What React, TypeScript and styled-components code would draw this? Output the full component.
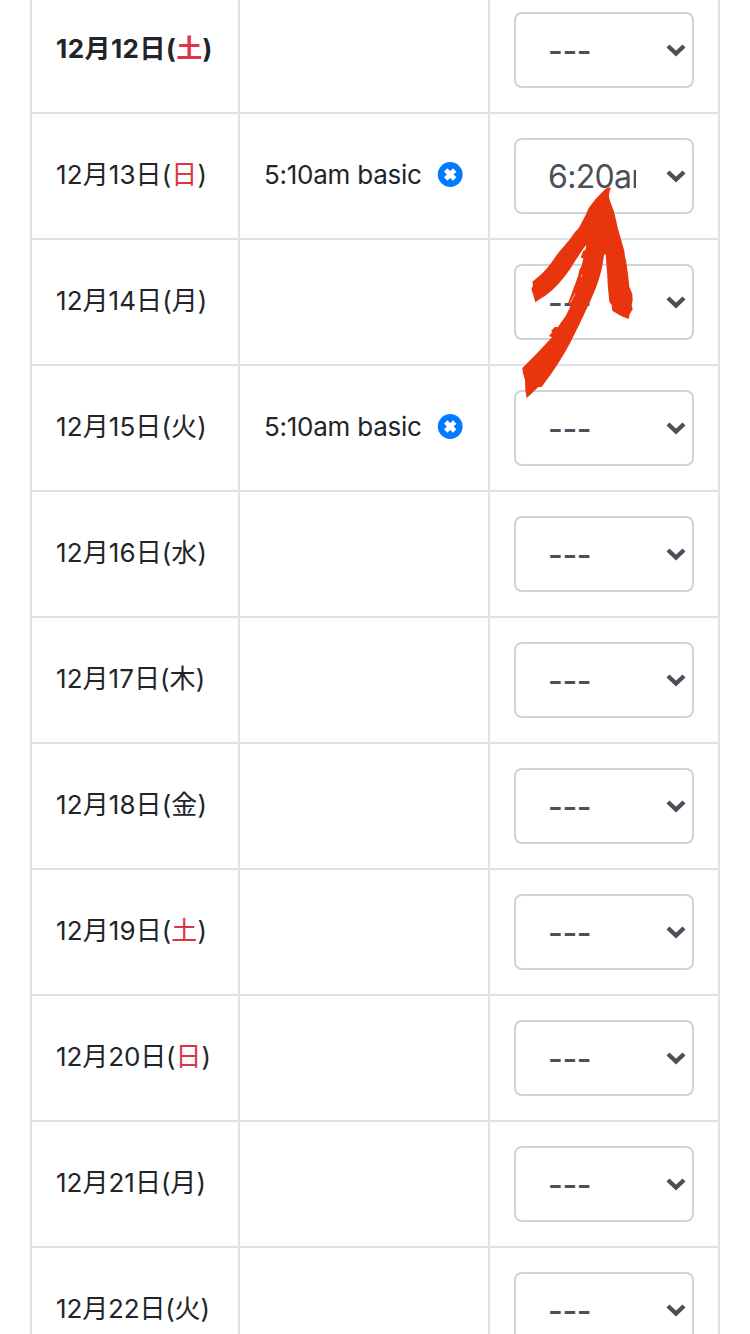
import React from "react";
import styled, { createGlobalStyle } from "styled-components";

const GlobalStyle = createGlobalStyle`
  * { box-sizing: border-box; }
  body {
    margin: 0;
    background: #fff;
    color: #212529;
    font-family: Inter, "Noto Sans CJK JP", sans-serif;
    font-size: 26px;
    -webkit-font-smoothing: antialiased;
  }
`;

const Page = styled.main`
  position: relative;
  width: 750px;
  height: 1334px;
  overflow: hidden;
`;

const Schedule = styled.div`
  width: 690px;
  margin: -12px 0 0 30px;
  border-left: 2px solid #dee2e6;
`;

const Row = styled.div<{ $today?: boolean }>`
  display: grid;
  grid-template-columns: 208px 250px 230px;
  height: 126px;
  font-weight: ${(p) => (p.$today ? 700 : 400)};
`;

const Cell = styled.div`
  display: flex;
  align-items: flex-start;
  padding: 24px;
  border-right: 2px solid #dee2e6;
  border-bottom: 2px solid #dee2e6;
  line-height: 38px;
  white-space: nowrap;
`;

const DateText = styled.span<{ $spacing: number }>`
  padding-top: 18px;
  letter-spacing: ${(p) => p.$spacing}px;
`;

const Day = styled.span<{ $holiday: boolean }>`
  color: ${(p) => (p.$holiday ? "#dc3545" : "inherit")};
`;

const Booking = styled.div`
  display: flex;
  align-items: center;
  padding-top: 18px;
  letter-spacing: -0.25px;
`;

const BookingName = styled.span`
  width: 173px;
`;

const CancelIcon = styled.svg`
  width: 26px;
  height: 26px;
  margin-top: -1px;
`;

const Select = styled.div`
  display: flex;
  align-items: center;
  justify-content: space-between;
  width: 180px;
  height: 76px;
  padding: 2px 6px 0 32px;
  border: 2px solid #ced4da;
  border-radius: 8px;
  color: #495057;
  font-size: 32px;
  font-weight: 400;
`;

const Value = styled.span<{ $empty: boolean }>`
  width: 88px;
  overflow: hidden;
  font-weight: ${(p) => (p.$empty ? 500 : 400)};
  letter-spacing: ${(p) => (p.$empty ? -0.4 : -0.7)}px;
`;

const Chevron = styled.svg`
  width: 20px;
  height: 14px;
  margin-top: -2px;
`;

const Arrow = styled.svg`
  position: absolute;
  left: 515px;
  top: 180px;
  width: 125px;
  height: 225px;
`;

interface Entry {
  date: number;
  day: string;
  spacing?: number;
}

const entries: Entry[] = [
  { date: 12, day: "土", spacing: 0.45 },
  { date: 13, day: "日", spacing: 0.1 },
  { date: 14, day: "月", spacing: 0.05 },
  { date: 15, day: "火", spacing: 0.1 },
  { date: 16, day: "水", spacing: 0.1 },
  { date: 17, day: "木", spacing: 0.05 },
  { date: 18, day: "金", spacing: 0.1 },
  { date: 19, day: "土", spacing: 0.1 },
  { date: 20, day: "日", spacing: -0.1 },
  { date: 21, day: "月" },
  { date: 22, day: "火", spacing: -0.15 },
];

const bookings: Record<number, string> = { 13: "5:10am basic", 15: "5:10am basic" };
const selections: Record<number, string> = { 13: "6:20am" };

export default function App() {
  return (
    <Page>
      <GlobalStyle />
      <Schedule>
        {entries.map(({ date, day, spacing = 0 }) => (
          <Row key={date} $today={date === 12}>
            <Cell>
              <DateText $spacing={spacing}>
                12月{date}日(<Day $holiday={"土日".includes(day)}>{day}</Day>)
              </DateText>
            </Cell>
            <Cell>
              {bookings[date] && (
                <Booking>
                  <BookingName>{bookings[date]}</BookingName>
                  <CancelIcon viewBox="0 0 26 26">
                    <circle cx="13.2" cy="12.5" r="12.4" fill="#007bff" />
                    <path
                      d="M8.700 8l9 9M17.700 8l-9 9"
                      stroke="#fff"
                      strokeWidth="4.7"
                    />
                  </CancelIcon>
                </Booking>
              )}
            </Cell>
            <Cell>
              <Select>
                <Value $empty={!selections[date]}>{selections[date] ?? "---"}</Value>
                <Chevron viewBox="0 0 20 14">
                  <path d="M2 3l8 7.600L18 3" fill="none" stroke="#495057" strokeWidth="4.300" />
                </Chevron>
              </Select>
            </Cell>
          </Row>
        ))}
      </Schedule>
      <Arrow viewBox="0 0 375 675">
        <path
          fill="#e8350e"
          d="M285 22Q275 22 268 30Q240 56 221 84L212 105L191 145L180 156L163 180L130 218L108 250Q80 285 70 290L52 305L54 316L49 328L55 345L61 367L75 357Q105 340 130 312Q150 290 165 268Q185 235 207 203L214 195L211 210L205 212L197 233L205 235L200 258L193 270L190 286L182 308L172 335L159 370L164 370L165 382L152 408L128 442L120 440L108 453L112 456L102 468L111 472L66 520L22 564L24 580L30 600L31 630L35 655L70 621L80 621L88 610Q130 555 165 490Q195 430 225 365Q258 295 265 240L267 224L272 222Q274 250 277 290Q278 320 281 345L283 365L290 375L292 392L318 408L341 417L344 403L353 388L350 375L353 362L352 343L343 320L340 290L333 240L330 230L328 213L310 150L297 95L285 62Q278 46 287 25Z"
        />
        <path
          d="M201 283l-3 8M180 341l-7 14M173 355l-7 13"
          stroke="#fff"
          strokeWidth="2.5"
          strokeOpacity="0.75"
        />
      </Arrow>
    </Page>
  );
}
